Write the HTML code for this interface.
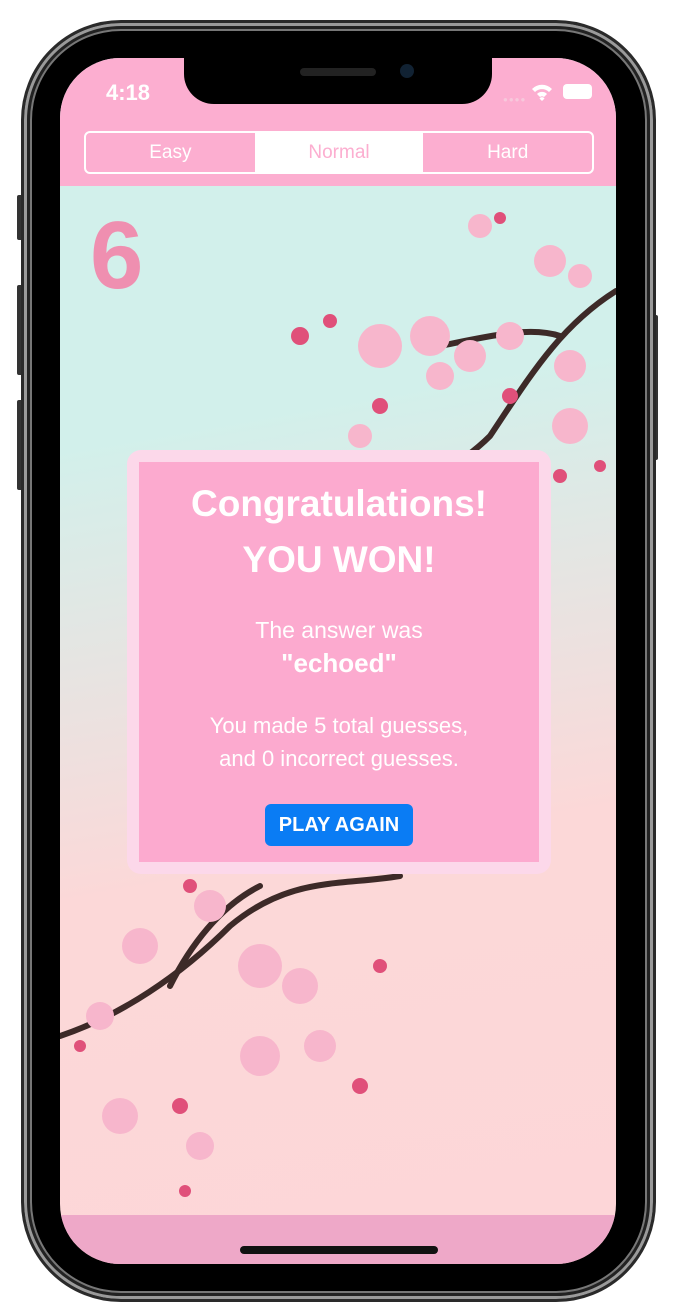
<!DOCTYPE html>
<html><head><meta charset="utf-8"><style>
*{margin:0;padding:0;box-sizing:border-box}
body{width:674px;height:1316px;background:#fff;position:relative;overflow:hidden;font-family:"Liberation Sans",sans-serif}
.phone{position:absolute;left:21px;top:20px;width:635px;height:1282px;border-radius:100px;background:#000;border:3px solid #2a2a2a;box-shadow:inset 0 0 0 3px #9a9a9a,inset 0 0 0 6px #222,inset 0 0 0 8px #777}
.bezel{position:absolute;left:34px;top:32px;width:606px;height:1254px;border-radius:88px;background:#000}
.btn{position:absolute;background:#333;width:6px;border-radius:2px}
.screen{position:absolute;left:60px;top:58px;width:556px;height:1206px;border-radius:60px;overflow:hidden;background:linear-gradient(170deg,#d2f0eb 0%,#d2f0eb 30%,#fcd8d8 65%,#fdd6d8 100%)}
.hdr{position:absolute;left:0;top:0;width:556px;height:128px;background:#fcaed0}
.notch{position:absolute;left:124px;top:0;width:308px;height:46px;background:#000;border-radius:0 0 30px 30px}
.seg{position:absolute;left:24px;top:73px;width:510px;height:43px;border:2px solid #fff;border-radius:6px;display:flex;overflow:hidden}
.seg div{flex:1;color:#fff;font-size:19px;line-height:39px;text-align:center}
.seg .on{background:#fff;color:#fcaed0}
.bot{position:absolute;left:0;top:1157px;width:556px;height:49px;background:#eea8c8}
.home{position:absolute;left:180px;top:1188px;width:198px;height:8px;border-radius:4px;background:#111}
.six{position:absolute;left:30px;top:148px;font-size:96px;font-weight:bold;color:#ef8fb0;line-height:100px}
.dlg{position:absolute;left:67px;top:392px;width:424px;height:424px;background:#fcd8ea;border-radius:14px}
.in{position:absolute;left:12px;top:12px;width:400px;height:400px;background:#fcaacf;text-align:center;color:#fff}
</style></head><body>
<div class="btn" style="left:17px;top:195px;height:45px"></div>
<div class="btn" style="left:17px;top:285px;height:90px"></div>
<div class="btn" style="left:17px;top:400px;height:90px"></div>
<div class="btn" style="left:652px;top:315px;height:145px"></div>
<div class="phone"></div>
<div class="screen">
 <div class="hdr"></div>
 <div class="notch"><div style="position:absolute;left:116px;top:10px;width:76px;height:8px;border-radius:4px;background:#222"></div><div style="position:absolute;left:216px;top:6px;width:14px;height:14px;border-radius:50%;background:#123"></div></div>
 <div style="position:absolute;left:46px;top:22px;color:#fff;font-size:22px;font-weight:bold">4:18</div>
 <div style="position:absolute;left:443px;top:37px;color:#f7c8dc;font-size:8px;letter-spacing:1px">●●●●</div>
 <svg style="position:absolute;left:470px;top:24px" width="24" height="20"><path d="M2 7 A14 14 0 0 1 22 7 L19 10 A10 10 0 0 0 5 10Z M7 12 A7 7 0 0 1 17 12 L14 15 A3 3 0 0 0 10 15Z M12 19 L9.5 16.5 A3 3 0 0 1 14.5 16.5Z" fill="#fff"/></svg>
 <div style="position:absolute;left:503px;top:26px;width:29px;height:15px;border-radius:4px;background:#fff"></div>
 <div class="seg"><div>Easy</div><div class="on">Normal</div><div>Hard</div></div>
 <div class="six">6</div>
 <svg style="position:absolute;left:0;top:128px" width="556" height="1030">
  <g stroke="#3d2a28" stroke-width="6" fill="none" stroke-linecap="round">
   <path d="M556 105 C500 140 470 190 430 250 C400 280 360 300 310 320"/>
   <path d="M500 150 C470 140 430 150 380 160"/>
   <path d="M0 850 C60 830 120 790 170 740 C230 690 280 700 340 690"/>
   <path d="M110 800 C130 760 160 720 200 700"/>
  </g>
  <g fill="#f7b6cc">
   <circle cx="420" cy="40" r="12"/><circle cx="490" cy="75" r="16"/><circle cx="520" cy="90" r="12"/><circle cx="320" cy="160" r="22"/><circle cx="370" cy="150" r="20"/><circle cx="410" cy="170" r="16"/><circle cx="380" cy="190" r="14"/><circle cx="450" cy="150" r="14"/><circle cx="510" cy="180" r="16"/><circle cx="510" cy="240" r="18"/><circle cx="330" cy="280" r="14"/><circle cx="300" cy="250" r="12"/>
   <circle cx="170" cy="630" r="20"/><circle cx="260" cy="630" r="16"/><circle cx="420" cy="630" r="18"/><circle cx="80" cy="760" r="18"/><circle cx="40" cy="830" r="14"/><circle cx="200" cy="780" r="22"/><circle cx="240" cy="800" r="18"/><circle cx="150" cy="720" r="16"/><circle cx="60" cy="930" r="18"/><circle cx="140" cy="960" r="14"/><circle cx="200" cy="870" r="20"/><circle cx="260" cy="860" r="16"/>
  </g>
  <g fill="#e0507a">
   <circle cx="440" cy="32" r="6"/><circle cx="240" cy="150" r="9"/><circle cx="270" cy="135" r="7"/><circle cx="320" cy="220" r="8"/><circle cx="450" cy="210" r="8"/><circle cx="540" cy="280" r="6"/><circle cx="500" cy="290" r="7"/>
   <circle cx="130" cy="700" r="7"/><circle cx="120" cy="920" r="8"/><circle cx="300" cy="900" r="8"/><circle cx="320" cy="780" r="7"/><circle cx="125" cy="1005" r="6"/><circle cx="20" cy="860" r="6"/>
  </g>
 </svg>
 <div class="bot"></div>
 <div class="home"></div>
 <div class="dlg"><div class="in">
  <div style="margin-top:14px;font-size:37px;font-weight:bold;line-height:56px">Congratulations!<br>YOU WON!</div>
  <div style="margin-top:26px;font-size:23px;line-height:33px">The answer was<br><b style="font-size:26px">"echoed"</b></div>
  <div style="margin-top:28px;font-size:22px;line-height:33px">You made 5 total guesses,<br>and 0 incorrect guesses.</div>
  <div style="position:absolute;left:126px;top:342px;width:148px;height:42px;border-radius:6px;background:#0a7cf4;font-size:20px;font-weight:bold;line-height:42px">PLAY AGAIN</div>
 </div></div>
</div>
</body></html>
